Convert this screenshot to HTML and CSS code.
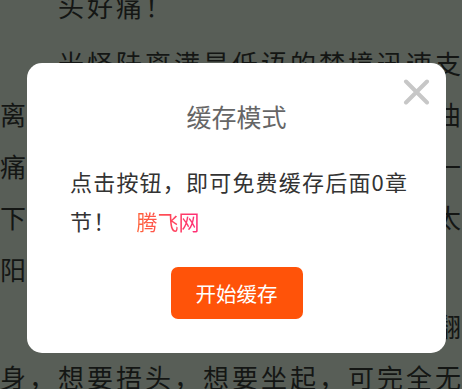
FILE: index.html
```html
<!DOCTYPE html>
<html lang="zh-CN">
<head>
<meta charset="utf-8">
<title>缓存模式</title>
<link rel="stylesheet" href="styles.css">
</head>
<body>
<div class="reader">
  <p class="para">头好痛！</p>
  <p class="para">光怪陆离满是低语的梦境迅速支离破碎，随之而来的是一阵剧烈扭曲痛感，仿佛有人正拿着小锤子一下一下地用力敲打着他的后脑勺，两侧太阳穴突突直跳，疼得他几乎要裂开。</p>
  <p class="para">他下意识地想要抬起手，想要翻身，想要捂头，想要坐起，可完全无法动弹。</p>
</div>

<div class="modal">
  <button class="close" aria-label="关闭">
    <svg width="27" height="26" viewBox="0 0 27 26"><path d="M3 2.5 L24 23.5 M24 2.5 L3 23.5" stroke="#c7c7c7" stroke-width="4" stroke-linecap="round" fill="none"/></svg>
  </button>
  <h2 class="title">缓存模式</h2>
  <p class="desc">点击按钮，即可免费缓存后面0章节！<span class="mark">腾飞网</span></p>
  <button class="start">开始缓存</button>
</div>
</body>
</html>
```

FILE: styles.css
```css
html, body {
  margin: 0;
  padding: 0;
  overflow: hidden;
  width: 462px;
  height: 389px;
}
body {
  background: #585e57;
  font-family: "Noto Sans CJK SC", "Noto Sans", sans-serif;
  position: relative;
}
.reader {
  width: 466px;
  margin-top: -20.5px;
}
.para {
  margin: 0 0 5.5px 0;
  font-size: 26px;
  line-height: 51.5px;
  letter-spacing: 3px;
  text-indent: 58px;
  color: #141614;
}
.modal {
  position: absolute;
  left: 27px;
  top: 63px;
  width: 419px;
  height: 290px;
  box-sizing: border-box;
  background: #fff;
  border-radius: 15px;
  padding: 35px 43px 0;
  display: flex;
  flex-direction: column;
  align-items: center;
}
.close {
  position: absolute;
  left: 376px;
  top: 16px;
  width: 27px;
  height: 26px;
  padding: 0;
  border: 0;
  background: none;
}
.close svg { display: block; }
.title {
  margin: 0;
  font-size: 25px;
  line-height: 36px;
  font-weight: normal;
  color: #666;
}
.desc {
  align-self: stretch;
  margin: 28px -24px 0 0;
  font-size: 22px;
  line-height: 38.5px;
  letter-spacing: 1.2px;
  color: #333;
}
.mark {
  margin-left: 20px;
  font-size: 21px;
  letter-spacing: 0;
  color: #fa4a5a;
  background: linear-gradient(90deg, #ff6438, #ff2d78);
  -webkit-background-clip: text;
  background-clip: text;
  -webkit-text-fill-color: transparent;
}
.start {
  margin-top: 26.5px;
  width: 132px;
  height: 52px;
  border: 0;
  border-radius: 7px;
  background: #ff5309;
  color: #fff;
  font-family: inherit;
  font-size: 20.5px;
  padding: 0;
}
```
